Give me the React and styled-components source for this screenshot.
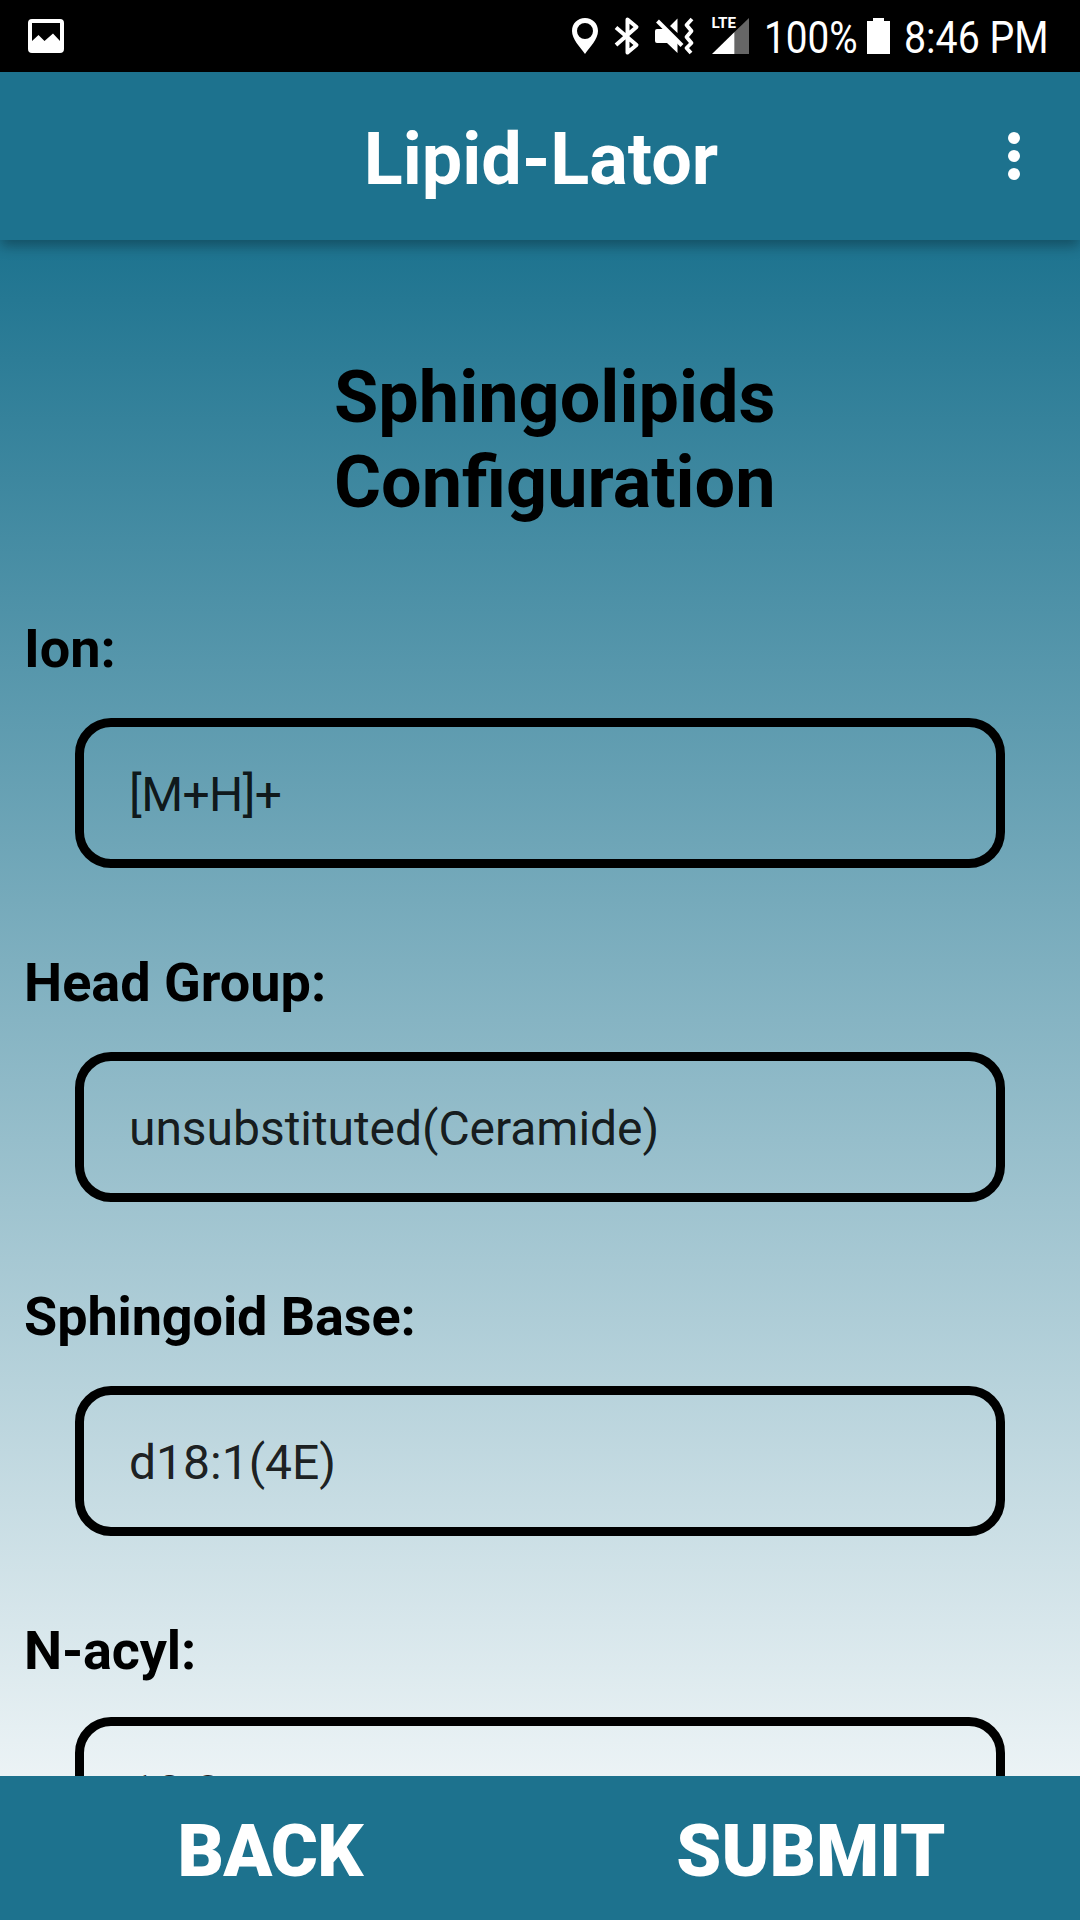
import React from "react";
import styled, { createGlobalStyle } from "styled-components";

const GlobalStyle = createGlobalStyle`
  * { box-sizing: border-box; }
  body { margin: 0; font-family: Roboto, "Liberation Sans", sans-serif; background: #000; }
`;

const Screen = styled.div`
  width: 1080px;
  height: 1920px;
  overflow: hidden;
  display: flex;
  flex-direction: column;
`;

const StatusBar = styled.header`
  flex: none;
  height: 72px;
  padding: 0 32px 0 28px;
  display: flex;
  align-items: center;
  background: #000;
  color: #fff;
`;

const Spacer = styled.div`
  flex: 1;
`;

const Glyph = styled.svg`
  flex: none;
  display: block;
  overflow: visible;
  width: ${(p) => p.$w}px;
  height: ${(p) => p.$h}px;
  margin-right: ${(p) => p.$gap || 0}px;
`;

const StatusText = styled.span`
  flex: none;
  width: ${(p) => p.$w}px;
  margin-right: ${(p) => p.$gap || 0}px;
  padding-top: 4px;
  font-size: 45px;
  line-height: 52px;
  white-space: nowrap;
`;

const Narrow = styled.span`
  display: inline-block;
  transform: scaleX(${(p) => p.$scale});
  transform-origin: 0 50%;
`;

const AppBar = styled.div`
  flex: none;
  height: 168px;
  padding: 0 46px 0 0;
  display: grid;
  grid-template-columns: 1fr auto 1fr;
  align-items: center;
  position: relative;
  z-index: 1;
  background: #1d728e;
  color: #fff;
  box-shadow: 0 7px 12px -1px rgba(0, 0, 0, 0.3);
`;

const AppTitle = styled.h1`
  grid-column: 2;
  margin: 7px -47px 0 1px;
  font-size: 72px;
  line-height: 84px;
  font-weight: 700;
`;

const MenuButton = styled.button`
  grid-column: 3;
  justify-self: end;
  margin-right: 14px;
  padding: 0;
  border: 0;
  background: none;
  display: flex;
  flex-direction: column;
  gap: 6px;
`;

const Dot = styled.span`
  width: 12px;
  height: 12px;
  border-radius: 50%;
  background: #fff;
`;

const Content = styled.main`
  flex: 1;
  min-height: 0;
  overflow: hidden;
  background: linear-gradient(to bottom, #1d738f 0, #fff 1680px);
`;

const PageTitle = styled.h2`
  width: 440px;
  margin: 115px 0 0 334px;
  font-size: 72px;
  line-height: 85px;
  font-weight: 700;
  color: #000;
`;

const Form = styled.form`
  display: flex;
  flex-direction: column;
  padding-top: 92px;
`;

const Field = styled.div`
  flex: none;
  height: 334px;
`;

const FieldLabel = styled.span`
  display: block;
  height: ${(p) => p.$h || 101}px;
  padding-left: 24px;
  font-size: 54px;
  line-height: 64px;
  font-weight: 700;
  letter-spacing: ${(p) => p.$tracking || 0}px;
  color: #000;
`;

const FieldBox = styled.span`
  display: flex;
  align-items: center;
  width: 930px;
  height: 150px;
  margin-left: 75px;
  padding: ${(p) => p.$top ?? 4}px 0 0 45px;
  border: 9px solid #000;
  border-radius: 36px;
  font-size: 48px;
  line-height: 56px;
  letter-spacing: ${(p) => p.$tracking || 0}px;
  color: rgba(0, 0, 0, 0.87);
`;

const Footer = styled.footer`
  flex: none;
  height: 144px;
  display: grid;
  grid-template-columns: 1fr 1fr;
  background: #1d728e;
`;

const FooterButton = styled.button`
  border: 0;
  padding: 8px 0 0 ${(p) => p.$inset || 0}px;
  background: none;
  color: #fff;
  font: 900 72px/84px Roboto, "Liberation Sans", sans-serif;
  letter-spacing: ${(p) => p.$tracking || 0}px;
`;

const fields = [
  { label: "Ion:", value: "[M+H]+", valueTracking: -0.6 },
  { label: "Head Group:", value: "unsubstituted(Ceramide)", valueTracking: -0.05 },
  { label: "Sphingoid Base:", value: "d18:1(4E)", labelTracking: -0.12 },
  { label: "N-acyl:", value: "18:0", labelHeight: 98, labelTracking: -0.15, valueTop: 2 },
];

const PictureIcon = () => (
  <Glyph $w={36} $h={34} viewBox="0 0 36 34">
    <path
      fill="#fff"
      fillRule="evenodd"
      d="M4 0H32Q36 0 36 4V30Q36 34 32 34H4Q0 34 0 30V4Q0 0 4 0ZM4 4V22L10.500 16 16.500 22 25 14.500 32 22V4Z"
    />
  </Glyph>
);

const PinIcon = () => (
  <Glyph $w={26} $h={36} $gap={16} viewBox="0 0 26 36">
    <path
      fill="#fff"
      fillRule="evenodd"
      d="M13 0C5.500 0 0 5.500 0 13C0 21 8 29 13 36C18 29 26 21 26 13C26 5.500 20.500 0 13 0ZM13 5A8 8 0 1 1 13 21A8 8 0 1 1 13 5Z"
    />
  </Glyph>
);

const BluetoothIcon = () => (
  <Glyph $w={26} $h={38} $gap={15} viewBox="0 0 26 38">
    <path
      fill="none"
      stroke="#fff"
      strokeWidth="4"
      strokeLinejoin="round"
      d="M2 10.500L22.500 28L13.500 35.500V2.500L22.500 10L2 28"
    />
  </Glyph>
);

const MuteIcon = () => (
  <Glyph $w={40} $h={38} $gap={17} viewBox="0 0 40 38">
    <path fill="#fff" d="M0 14Q0 12 2 12H10L22.500 25V36L12 26H2Q0 26 0 24ZM22.500 1.500V16L15 9Z" />
    <path fill="none" stroke="#fff" strokeWidth="4" d="M2.500 4L27 28.500" />
    <path
      fill="none"
      stroke="#fff"
      strokeWidth="3.800"
      strokeLinejoin="round"
      d="M37 2L31.500 8L36.500 14L31.500 20L36.500 26L31.500 31L36 36"
    />
  </Glyph>
);

const SignalIcon = () => (
  <Glyph $w={37} $h={36} $gap={15} viewBox="0 0 37 36">
    <path fill="#666" d="M37 0V36H22.500V14Z" />
    <path fill="#fff" d="M22.500 14V36H0Z" />
    <text
      x="-0.500"
      y="10"
      fill="#fff"
      fontSize="14"
      fontWeight="700"
      textLength="24.500"
      lengthAdjust="spacingAndGlyphs"
    >
      LTE
    </text>
  </Glyph>
);

const BatteryIcon = () => (
  <Glyph $w={23} $h={36} $gap={14} viewBox="0 0 23 36">
    <path fill="#fff" d="M6 0H17V3H23V36H0V3H6Z" />
  </Glyph>
);

export default function App() {
  return (
    <Screen>
      <GlobalStyle />
      <StatusBar>
        <PictureIcon />
        <Spacer />
        <PinIcon />
        <BluetoothIcon />
        <MuteIcon />
        <SignalIcon />
        <StatusText $w={93} $gap={10}>
          <Narrow $scale={0.86}>100%</Narrow>
        </StatusText>
        <BatteryIcon />
        <StatusText $w={144}>
          <Narrow $scale={0.873}>8:46 PM</Narrow>
        </StatusText>
      </StatusBar>
      <AppBar>
        <AppTitle>Lipid-Lator</AppTitle>
        <MenuButton type="button" aria-label="More options">
          <Dot />
          <Dot />
          <Dot />
        </MenuButton>
      </AppBar>
      <Content>
        <PageTitle>Sphingolipids Configuration</PageTitle>
        <Form>
          {fields.map((f) => (
            <Field key={f.label}>
              <FieldLabel $h={f.labelHeight} $tracking={f.labelTracking}>
                {f.label}
              </FieldLabel>
              <FieldBox $tracking={f.valueTracking} $top={f.valueTop}>
                {f.value}
              </FieldBox>
            </Field>
          ))}
        </Form>
      </Content>
      <Footer>
        <FooterButton type="button" $tracking={-0.8}>
          BACK
        </FooterButton>
        <FooterButton type="button" $tracking={0.1} $inset={2}>
          SUBMIT
        </FooterButton>
      </Footer>
    </Screen>
  );
}
